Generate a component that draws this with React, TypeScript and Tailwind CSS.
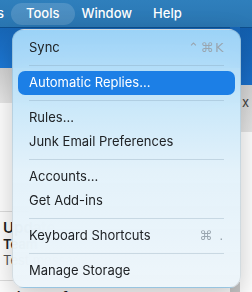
import React from 'react';

type Row = { label: string; shortcut?: string; active?: boolean } | 'sep';

const rows: Row[] = [
  { label: 'Sync', shortcut: '⌃⌘K' },
  'sep',
  { label: 'Automatic Replies...', active: true },
  'sep',
  { label: 'Rules...' },
  { label: 'Junk Email Preferences' },
  'sep',
  { label: 'Accounts...' },
  { label: 'Get Add-ins' },
  'sep',
  { label: 'Keyboard Shortcuts', shortcut: '⌘ .' },
  'sep',
  { label: 'Manage Storage' },
];

const ToolsMenu = () => (
  <div className="absolute left-[12px] top-[29px] w-[229px] rounded-[12px] border border-black/10 bg-[linear-gradient(180deg,rgba(163,216,250,0.95)_0%,rgba(200,231,249,0.95)_30%,rgba(226,241,250,0.95)_55%,rgba(237,245,250,0.97)_100%)] pt-[6px] pb-[4px] shadow-[0_10px_28px_rgba(0,0,0,0.22)] backdrop-blur-xl">
    {rows.map((row, i) =>
      row === 'sep' ? (
        <div key={i} className="h-[11px] pt-[5px]">
          <div className="mx-[16px] h-px bg-[#7d98ad]/30" />
        </div>
      ) : (
        <div
          key={i}
          className={`mx-[5px] flex h-6 items-center rounded-[7px] pl-[11px] pr-[10px] text-[13px] ${
            row.active ? 'bg-[#1c7fe6] text-white' : 'text-[#202326]'
          }`}
        >
          <span>{row.label}</span>
          {row.shortcut && (
            <span className="ml-auto font-['DejaVu_Sans',sans-serif] text-[13px] tracking-[1.5px] text-[#9aa6b0]">{row.shortcut}</span>
          )}
        </div>
      )
    )}
  </div>
);

export default function App() {
  return (
    <div className="relative h-[292px] w-[252px] overflow-hidden bg-white font-['Inter','Liberation_Sans',sans-serif]">
      {/* menu bar */}
      <div className="flex h-[27px] items-center bg-[linear-gradient(180deg,#2f7fbc,#2a76b2)] text-[13px] font-medium text-white">
        <span className="-ml-[3px]">s</span>
        <span className="ml-[7px] flex h-[22px] items-center rounded-full bg-white/15 pl-[15px] pr-[16px]">Tools</span>
        <span className="ml-[6px]">Window</span>
        <span className="ml-[21px]">Help</span>
      </div>

      <div className="flex h-[265px]">
        {/* message list pane */}
        <div className="flex w-[230px] shrink-0 flex-col">
          <div className="h-[41px] shrink-0 border-t border-[#0e4f8e] bg-[linear-gradient(180deg,#1766b6,#1d79d7)]" />
          <div className="h-[35px] shrink-0 bg-[linear-gradient(180deg,#d3d3d3,#e8e8e8)]" />
          <div className="h-[109px] shrink-0 border-b border-[#dedede]" />
          <div className="shrink-0 border-b border-[#dedede] pl-[3px] pt-[7px] pb-[11px]">
            <div className="flex h-[18px] items-center text-[15px] font-semibold text-[#1f1f1f]">
              <span>Update</span>
              <span className="ml-auto mr-[51px] h-[7px] w-[7px] rounded-full bg-[#1c7fe6]" />
            </div>
            <div className="flex h-4 items-center text-[13px] font-semibold text-[#222]">Team</div>
            <div className="flex h-4 items-center text-[13px] text-[#555]">Test message</div>
          </div>
          <div className="shrink-0 pl-[3px] pt-[8px]">
            <div className="flex h-[18px] items-center text-[15px] font-semibold text-[#1f1f1f]">
              <span>Microsoft Outlook Co...</span>
              <span className="ml-auto mr-[51px] h-[7px] w-[7px] rounded-full bg-[#1c7fe6]" />
            </div>
          </div>
        </div>

        {/* scrollbar */}
        <div className="flex w-[10px] shrink-0 flex-col">
          <div className="h-[41px] shrink-0 bg-[linear-gradient(180deg,#1766b6,#1d79d7)]" />
          <div className="h-[35px] shrink-0 bg-[linear-gradient(180deg,#d3d3d3,#e8e8e8)]" />
          <div className="flex-1" />
          <div className="h-[10px] shrink-0 bg-[#c9c9c9]" />
        </div>

        {/* reading pane */}
        <div className="flex flex-1 flex-col">
          <div className="h-[58px] shrink-0 border-t border-[#0e4f8e] bg-[linear-gradient(180deg,#135fae,#1a70cc)]" />
          <div className="flex h-[47px] shrink-0 items-start bg-[linear-gradient(180deg,#d5d5d5,#e6e6e6)] pt-[8px] pl-[2px] text-[13px] text-[#444]">x</div>
          <div className="flex-1 bg-white" />
        </div>
      </div>

      <ToolsMenu />
    </div>
  );
}
